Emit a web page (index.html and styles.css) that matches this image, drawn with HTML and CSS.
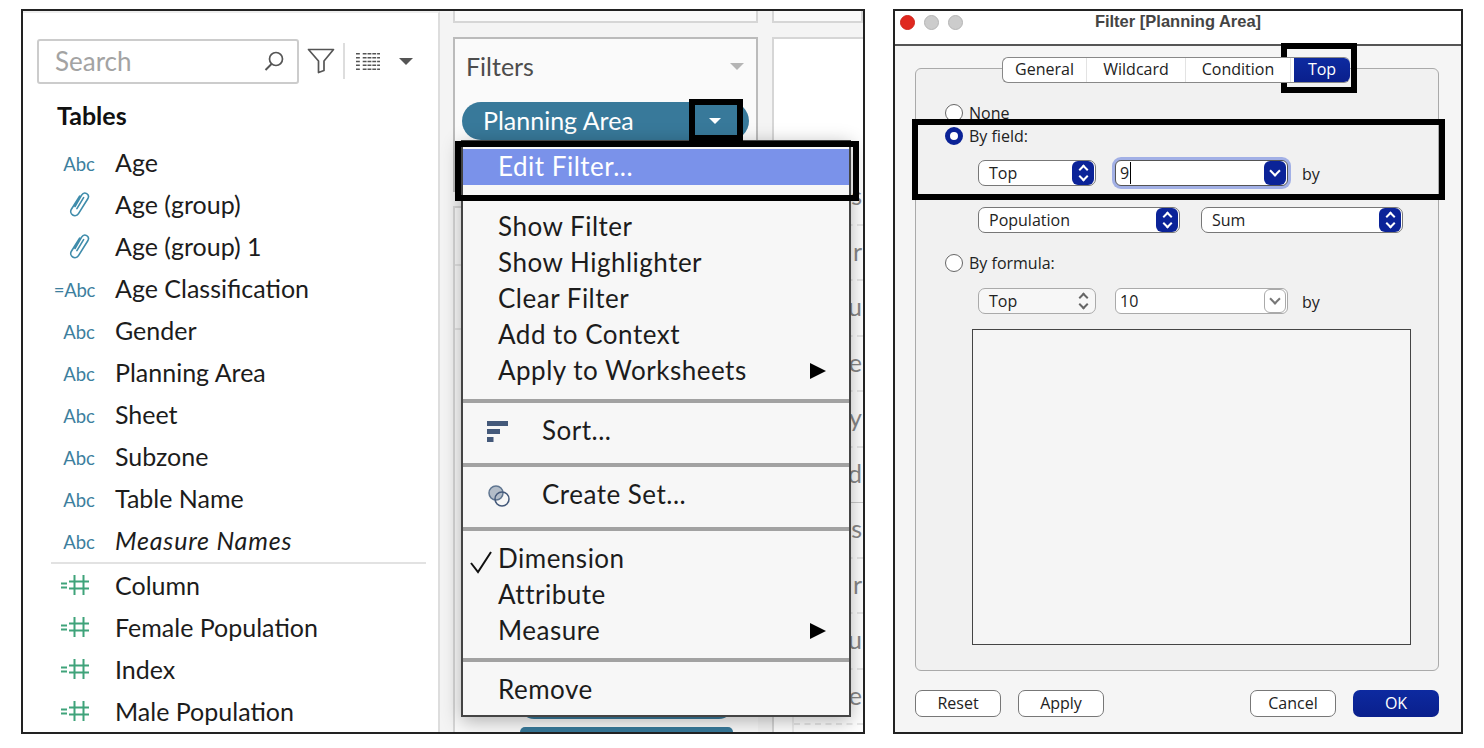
FILE: index.html
```html
<!DOCTYPE html>
<html lang="en">
<head>
  <meta charset="UTF-8">
  <link rel="stylesheet" href="styles.css">
  <title>Edit Filter - Top</title>
</head>
<body>
  <svg class="defs" width="0" height="0">
    <defs>
      <symbol id="clip" viewBox="0 0 22 26">
        <path d="M7 15.5 13.6 4.2C14.8 2.2 17 1.6 18.7 2.6 20.4 3.6 20.9 5.8 19.8 7.8L10.5 22.6C9.2 24.6 6.6 25.2 4.7 24 2.7 22.8 2.2 20.3 3.4 18.2L11.6 5.2M15.6 6.6 8.9 17.6" fill="none" stroke="#3f8cab" stroke-width="1.6" stroke-linecap="round"/>
      </symbol>
      <symbol id="num" viewBox="0 0 30 20">
        <path d="M1 8.500H7M1 12.500H7M9 6.500H29M9 13.500H29M14.500 0V20M23.500 0V20" fill="none" stroke="#3fa37a" stroke-width="2"/>
      </symbol>
    </defs>
  </svg>

  <div class="page">
    <div class="shot tableau">
      <aside class="sidebar">
        <div class="search-row">
          <div class="search">
            <span>Search</span>
            <svg width="22" height="22" viewBox="0 0 22 22"><circle cx="13" cy="9" r="6.500" fill="none" stroke="#555" stroke-width="1.700"/><path d="M8.500 14 2.500 20" stroke="#555" stroke-width="2" fill="none"/></svg>
          </div>
          <svg class="funnel" width="28" height="26" viewBox="0 0 28 26"><path d="M1.500 1.500H26.500L17 13V22.500L11.500 24.500V13Z" fill="none" stroke="#555" stroke-width="1.700" stroke-linejoin="round"/></svg>
          <div class="vsep"></div>
          <svg class="listicon" width="24" height="19" viewBox="0 0 25 19"><path d="M0 1.500H5M7 1.500H25M0 5.500H5M7 5.500H25M0 9.500H5M7 9.500H25M0 13.500H5M7 13.500H25M0 17.500H5M7 17.500H25" stroke="#555" stroke-width="1.600" stroke-dasharray="4 1" fill="none"/></svg>
          <div class="caret"></div>
        </div>
        <h2>Tables</h2>
        <ul class="fields">
          <li><span class="ico abc">Abc</span>Age</li>
          <li><span class="ico"><svg width="22" height="26"><use href="#clip"/></svg></span>Age (group)</li>
          <li><span class="ico"><svg width="22" height="26"><use href="#clip"/></svg></span>Age (group) 1</li>
          <li><span class="ico abc calc">=Abc</span>Age Classification</li>
          <li><span class="ico abc">Abc</span>Gender</li>
          <li><span class="ico abc">Abc</span>Planning Area</li>
          <li><span class="ico abc">Abc</span>Sheet</li>
          <li><span class="ico abc">Abc</span>Subzone</li>
          <li><span class="ico abc">Abc</span>Table Name</li>
          <li><span class="ico abc">Abc</span><em>Measure Names</em></li>
        </ul>
        <hr class="field-sep">
        <ul class="fields">
          <li><span class="ico measure"><svg width="30" height="20"><use href="#num"/></svg></span>Column</li>
          <li><span class="ico measure"><svg width="30" height="20"><use href="#num"/></svg></span>Female Population</li>
          <li><span class="ico measure"><svg width="30" height="20"><use href="#num"/></svg></span>Index</li>
          <li><span class="ico measure"><svg width="30" height="20"><use href="#num"/></svg></span>Male Population</li>
        </ul>
      </aside>

      <div class="workspace">
        <div class="col shelves">
          <div class="card stub"></div>
          <div class="card filters">
            <div class="filters-head"><span>Filters</span><div class="caret light"></div></div>
            <div class="pill"><span>Planning Area</span><div class="caret white"></div></div>
          </div>
          <div class="card marks">
            <div class="marks-line"></div>
            <div class="marks-line"></div>
            <div class="marks-pills">
              <div class="mark-pill"></div>
              <div class="mark-pill"></div>
            </div>
          </div>
        </div>
        <div class="col view">
          <div class="card stub"></div>
          <div class="card canvas">
            <ul class="frag">
              <li>s</li>
              <li>r</li>
              <li>u</li>
              <li>e</li>
              <li>y</li>
              <li class="solid">d</li>
              <li>es</li>
              <li>r</li>
              <li>u</li>
              <li>e</li>
            </ul>
          </div>
        </div>
      </div>

      <div class="menu">
        <div class="menu-group first">
          <div class="item active">Edit Filter...</div>
        </div>
        <div class="menu-group plain">
          <div class="item">Show Filter</div>
          <div class="item">Show Highlighter</div>
          <div class="item">Clear Filter</div>
          <div class="item">Add to Context</div>
          <div class="item more">Apply to Worksheets<i class="arrow"></i></div>
        </div>
        <div class="menu-group single">
          <div class="item with-icon">
            <svg width="22" height="22" viewBox="0 0 22 22"><path d="M0 1H21V6H0ZM0 9H13V14H0ZM0 17H6.500V22H0Z" fill="#44597a"/></svg>
            Sort...
          </div>
        </div>
        <div class="menu-group single">
          <div class="item with-icon">
            <svg class="set-icon" width="24" height="24" viewBox="0 0 24 24"><circle cx="9" cy="9" r="7" fill="#b3bdc9" stroke="#5f7590" stroke-width="1.500"/><circle cx="15" cy="15" r="7" fill="none" stroke="#44597a" stroke-width="1.500"/></svg>
            Create Set...
          </div>
        </div>
        <div class="menu-group checks">
          <div class="item"><svg class="check" width="24" height="24" viewBox="0 0 24 24"><path d="M2 13 9 22 22 2" fill="none" stroke="#111" stroke-width="2"/></svg>Dimension</div>
          <div class="item">Attribute</div>
          <div class="item more">Measure<i class="arrow"></i></div>
        </div>
        <div class="menu-group last">
          <div class="item">Remove</div>
        </div>
      </div>

      <div class="mark mark-caret"></div>
      <div class="mark mark-edit"></div>
    </div>

    <div class="shot dialog">
      <header class="titlebar">
        <div class="lights"><i class="red"></i><i></i><i></i></div>
        <b>Filter [Planning Area]</b>
      </header>
      <div class="dialog-body">
        <div class="tabs">
          <span>General</span><span>Wildcard</span><span>Condition</span><span class="on">Top</span>
        </div>
        <div class="group">
          <label class="radio"><i></i>None</label>
          <label class="radio by-field"><i class="on"></i>By field:</label>
          <div class="row row-top">
            <div class="select w-top">Top<i class="stepper"></i></div>
            <div class="combo focus"><span class="val">9</span><i class="drop"></i></div>
            <span class="by">by</span>
          </div>
          <div class="row row-pop">
            <div class="select w-pop">Population<i class="stepper"></i></div>
            <div class="select w-sum">Sum<i class="stepper"></i></div>
          </div>
          <label class="radio by-formula"><i></i>By formula:</label>
          <div class="row row-formula">
            <div class="select w-top off">Top<i class="stepper"></i></div>
            <div class="combo off"><span class="val">10</span><i class="drop"></i></div>
            <span class="by">by</span>
          </div>
          <div class="formula"></div>
        </div>
        <footer class="buttons">
          <button>Reset</button>
          <button>Apply</button>
          <div class="spacer"></div>
          <button>Cancel</button>
          <button class="primary">OK</button>
        </footer>
      </div>

      <div class="mark mark-tab"></div>
      <div class="mark mark-field"></div>
    </div>
  </div>
</body>
</html>
```

FILE: styles.css
```css
body {
  margin: 0;
  background-color: #fff;
  font-family: Lato, Arial, sans-serif;
  color: #1c1c1c;
}

ul {
  list-style: none;
  margin: 0;
  padding: 0;
}

.defs {
  position: absolute;
}

.page {
  display: flex;
  gap: 28px;
  padding: 9px 0 0 21px;
}

.shot {
  position: relative;
  box-sizing: border-box;
  height: 725px;
  border: 2px solid #222;
}

.mark {
  position: absolute;
  box-sizing: border-box;
  border: 6px solid #000;
}

.caret {
  width: 0;
  height: 0;
  border-left: 7px solid transparent;
  border-right: 7px solid transparent;
  border-top: 7px solid #555;
}

.caret.light {
  border-top-color: #b5b5b5;
}

.caret.white {
  border-left-width: 6px;
  border-right-width: 6px;
  border-top: 6px solid #fff;
  margin-top: 2px;
}

/* left picture */

.tableau {
  display: flex;
  width: 844px;
  overflow: hidden;
}

.sidebar {
  box-sizing: border-box;
  width: 417px;
  height: 100%;
  flex-shrink: 0;
  background-color: #fff;
  border-top: 2px solid #eee;
  border-right: 2px solid #ddd;
}

.search-row {
  display: flex;
  align-items: center;
  height: 44px;
  margin-top: 26px;
  padding-left: 14px;
}

.search {
  box-sizing: border-box;
  display: flex;
  align-items: center;
  justify-content: space-between;
  width: 262px;
  height: 45px;
  padding: 0 12px 0 16px;
  border: 2px solid #ccc;
  border-radius: 3px;
  font-size: 26px;
  color: #a3a3a3;
}

.funnel {
  margin-left: 8px;
}

.vsep {
  width: 2px;
  height: 36px;
  margin-left: 8px;
  background-color: #ddd;
}

.listicon {
  margin-left: 11px;
}

.search-row .caret {
  margin-left: 19px;
}

.sidebar h2 {
  margin: 17px 0 11px 34px;
  font-size: 25px;
  line-height: 30px;
  font-weight: 700;
  color: #111;
}

.fields li {
  display: flex;
  align-items: center;
  height: 42px;
  font-size: 25px;
  white-space: nowrap;
}

.fields em {
  font-style: italic;
  letter-spacing: 0.8px;
}

.ico {
  display: flex;
  justify-content: center;
  align-items: center;
  width: 32px;
  margin-left: 40px;
  margin-right: 20px;
  flex-shrink: 0;
}

.abc {
  padding-top: 4px;
  font-size: 18.500px;
  color: #3d7f9e;
}

.calc {
  margin-left: 33px;
  width: 39px;
  justify-content: flex-end;
  letter-spacing: -0.3px;
}

.measure {
  margin-left: 36px;
  margin-right: 24px;
}

.field-sep {
  height: 2px;
  margin: 1px 12px 0 28px;
  border: 0;
  background-color: #e2e2e2;
}

.workspace {
  flex: 1;
  display: flex;
  gap: 14px;
  padding-left: 13px;
  background-color: #f4f4f4;
}

.col {
  display: flex;
  flex-direction: column;
  gap: 14px;
}

.shelves {
  width: 305px;
  flex-shrink: 0;
}

.view {
  flex: 1;
}

.card {
  box-sizing: border-box;
  border: 2px solid #d6d6d6;
  background-color: #fafafa;
}

.stub {
  height: 12px;
  border-top: 0;
}

.filters {
  height: 155px;
  border-color: #bbb;
  padding: 0 7px;
}

.filters-head {
  display: flex;
  align-items: center;
  justify-content: space-between;
  box-sizing: border-box;
  height: 58px;
  padding: 0 5px 4px 4px;
  font-size: 25px;
  color: #4d4d4d;
}

.pill {
  display: flex;
  align-items: center;
  justify-content: space-between;
  box-sizing: border-box;
  height: 38px;
  margin-top: 5px;
  padding: 0 28px 2px 21px;
  border-radius: 19px;
  background-color: #38799a;
  color: #fff;
  font-size: 25px;
}

.marks {
  flex: 1;
  display: flex;
  flex-direction: column;
  border-bottom: 0;
  border-right: 0;
  padding-top: 56px;
}

.marks-line {
  height: 62px;
  border-top: 2px solid #e4e4e4;
}

.marks-pills {
  display: flex;
  flex-direction: column;
  gap: 8px;
  margin-top: auto;
  padding-left: 65px;
}

.mark-pill {
  width: 213px;
  height: 17px;
  border-radius: 0 0 14px 14px;
  background-color: #38799a;
}

.mark-pill + .mark-pill {
  height: 5px;
  border-radius: 14px 14px 0 0;
}

.canvas {
  flex: 1;
  background-color: #fff;
  border-right: 0;
  border-bottom: 0;
  padding-top: 131px;
}

.frag {
  border-left: 2px solid #eee;
  margin-left: 18px;
  height: 100%;
}

.frag li {
  box-sizing: border-box;
  height: 55.5px;
  padding-right: 1px;
  border-bottom: 2px dashed #e8e8e8;
  color: #888;
  font-size: 25px;
  line-height: 50px;
  text-align: right;
}

.frag .solid {
  border-bottom: 1px solid #ccc;
}

.menu {
  position: absolute;
  box-sizing: border-box;
  left: 438px;
  top: 129px;
  width: 390px;
  height: 577px;
  border: 2px solid #444;
  background-color: #f7f7f7;
  box-shadow: 0 4px 18px rgba(0, 0, 0, 0.3);
  font-size: 26px;
  letter-spacing: 0.5px;
}

.menu-group + .menu-group {
  border-top: 4px solid #a2a2a2;
}

.menu-group.first {
  height: 60px;
  padding-top: 7px;
}

.menu-group.first + .menu-group {
  border-top: 0;
}

.menu-group.plain {
  height: 190px;
}

.menu-group.single {
  height: 50px;
  padding-top: 10px;
}

.menu-group.checks {
  padding: 10px 0 9px;
}

.menu-group.last {
  padding-top: 10px;
}

.item {
  position: relative;
  display: flex;
  align-items: center;
  box-sizing: border-box;
  height: 36px;
  padding: 0 0 2px 35px;
  white-space: nowrap;
}

.item.active {
  background-color: #7a92ea;
  color: #fff;
}

.with-icon {
  padding-left: 24px;
}

.with-icon svg {
  margin: 2px 33px 0 0;
}

.with-icon .set-icon {
  margin: 4px 31px 0 0;
}

.check {
  position: absolute;
  left: 6px;
  top: 9px;
}

.arrow {
  position: absolute;
  right: 23px;
  top: 10px;
  width: 0;
  height: 0;
  border-left: 16px solid #000;
  border-top: 8px solid transparent;
  border-bottom: 8px solid transparent;
}

.mark-caret {
  left: 666px;
  top: 88px;
  width: 54px;
  height: 42px;
}

.mark-edit {
  left: 432px;
  top: 130px;
  width: 404px;
  height: 60px;
}

/* right picture */

.dialog {
  width: 570px;
  background-color: #f5f5f5;
  font-family: "Open Sans", Arial, sans-serif;
  font-size: 16px;
  color: #222;
}

.titlebar {
  position: relative;
  display: flex;
  justify-content: center;
  box-sizing: border-box;
  height: 35px;
  padding-top: 1px;
  background-color: #fff;
  border-bottom: 2px solid #555;
  font-family: "Liberation Sans", Arial, sans-serif;
  font-size: 16.500px;
  color: #444;
}

.lights {
  position: absolute;
  left: 5px;
  top: 4px;
  display: flex;
  gap: 9px;
}

.lights i {
  box-sizing: border-box;
  width: 15px;
  height: 15px;
  border-radius: 50%;
  background-color: #ccc;
  border: 1px solid #b5b5b5;
}

.lights .red {
  background-color: #e0281f;
  border-color: #d0241c;
}

.dialog-body {
  padding: 11px 22px 0 20px;
}

.tabs {
  position: relative;
  z-index: 1;
  display: flex;
  width: 348px;
  height: 26px;
  margin-left: 87px;
  margin-bottom: -15px;
  box-sizing: border-box;
  border: 1px solid #888;
  border-right: 0;
  border-radius: 6px;
  background-color: #fff;
  line-height: 23px;
  text-align: center;
}

.tabs span {
  border-right: 1px solid #e3e3e3;
}

.tabs span:nth-child(1) { width: 83px; }
.tabs span:nth-child(2) { width: 98px; }
.tabs span:nth-child(3) { width: 104px; }

.tabs .on {
  flex: 1;
  margin-left: 3px;
  border: 0;
  border-radius: 0 6px 6px 0;
  background: linear-gradient(#0d2aa0, #0a1f8c);
  color: #fff;
}

.group {
  box-sizing: border-box;
  height: 603px;
  padding: 34px 28px 0 29px;
  border: 1px solid #aaa;
  border-radius: 6px;
  background-color: #f1f1f1;
}

.radio {
  display: flex;
  align-items: center;
  gap: 6px;
  height: 20px;
}

.radio i {
  box-sizing: border-box;
  width: 18px;
  height: 18px;
  border-radius: 50%;
  border: 1px solid #666;
  background-color: #fff;
}

.radio i.on {
  border: 5px solid #0a2296;
}

.by-field {
  margin-top: 3px;
}

.by-formula {
  margin-top: 20px;
}

.row {
  display: flex;
  align-items: center;
  margin-left: 33px;
}

.row-top {
  height: 28px;
  margin-top: 13px;
}

.row-pop {
  gap: 21px;
  margin-top: 20px;
}

.row-formula {
  margin-top: 15px;
}

.by {
  padding-top: 2px;
}

.select {
  position: relative;
  box-sizing: border-box;
  height: 26px;
  padding-left: 10px;
  border: 1px solid #777;
  border-radius: 7px;
  background-color: #fff;
  line-height: 25px;
}

.w-top { width: 118px; }
.w-pop { width: 202px; }
.w-sum { width: 202px; }

.stepper {
  position: absolute;
  right: 1px;
  top: 0;
  width: 22px;
  height: 24px;
  border-radius: 6px;
  background-color: #0b2398;
}

.stepper::before,
.stepper::after {
  content: "";
  position: absolute;
  left: 7.5px;
  width: 7px;
  height: 7px;
  border-left: 2px solid #fff;
  border-top: 2px solid #fff;
  box-sizing: border-box;
  transform: rotate(45deg);
}

.stepper::before {
  top: 5px;
}

.stepper::after {
  top: 12px;
  transform: rotate(225deg);
}

.select.off {
  border-color: #aaa;
  background-color: #f7f7f7;
}

.off .stepper {
  background: transparent;
}

.off .stepper::before,
.off .stepper::after {
  border-color: #666;
}

.combo {
  position: relative;
  box-sizing: border-box;
  width: 173px;
  height: 26px;
  margin-left: 19px;
  margin-right: 14px;
  padding-left: 4px;
  border: 1px solid #555;
  border-radius: 6px;
  background-color: #fff;
  line-height: 25px;
}

.combo.focus {
  box-shadow: 0 0 0 3px #a2b0e6;
}

.combo.focus .val {
  border-right: 1px solid #000;
  padding-right: 1px;
}

.combo.off {
  border-color: #aaa;
}

.drop {
  position: absolute;
  right: 1px;
  top: 0;
  width: 22px;
  height: 24px;
  border-radius: 6px;
  background-color: #0b2398;
}

.drop::before {
  content: "";
  position: absolute;
  left: 7px;
  top: 6px;
  width: 8px;
  height: 8px;
  box-sizing: border-box;
  border-right: 2px solid #fff;
  border-bottom: 2px solid #fff;
  transform: rotate(45deg);
}

.off .drop {
  background-color: #fff;
  border: 1px solid #aaa;
  box-sizing: border-box;
}

.off .drop::before {
  left: 6px;
  top: 5px;
  border-color: #777;
}

.formula {
  box-sizing: border-box;
  width: 439px;
  height: 316px;
  margin: 15px 0 0 27px;
  border: 1px solid #444;
  background-color: #f5f5f5;
}

.buttons {
  display: flex;
  gap: 17px;
  margin-top: 19px;
}

.spacer {
  flex: 1;
}

button {
  box-sizing: border-box;
  width: 86px;
  height: 27px;
  padding: 0 0 2px;
  border: 1px solid #777;
  border-radius: 7px;
  background-color: #fff;
  color: #222;
  font: inherit;
}

button.primary {
  border: 0;
  background: linear-gradient(#0d2aa0, #0a1f8c);
  color: #fff;
}

.mark-tab {
  left: 386px;
  top: 32px;
  width: 76px;
  height: 50px;
}

.mark-field {
  left: 17px;
  top: 108px;
  width: 533px;
  height: 81px;
}
```
